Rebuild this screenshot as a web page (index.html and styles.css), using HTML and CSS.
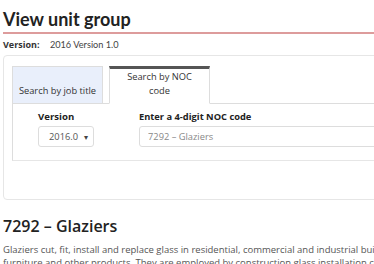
FILE: index.html
```html
<!DOCTYPE html>
<html lang="en">
<head>
    <meta charset="UTF-8">
    <meta name="viewport" content="width=device-width, initial-scale=1.0">
    <title>View unit group</title>
    <link rel="stylesheet" href="styles.css">
</head>
<body>
    <div class="page">
        <!-- Header -->
        <header class="page-header">
            <h1>View unit group</h1>
        </header>
        <p class="version-line"><strong>Version:</strong> <span>2016 Version 1.0</span></p>

        <!-- Search panel -->
        <section class="panel">
            <ul class="tabs">
                <li class="tab tab-title">Search by job title</li>
                <li class="tab tab-noc active">Search by NOC code</li>
            </ul>
            <div class="tab-content">
                <div class="field field-version">
                    <label>Version</label>
                    <div class="select">2016.0 <span class="caret">&#9662;</span></div>
                </div>
                <div class="field field-code">
                    <label for="noc-code">Enter a 4-digit NOC code</label>
                    <input type="text" id="noc-code" placeholder="7292 &ndash; Glaziers">
                </div>
            </div>
        </section>

        <!-- Unit group -->
        <section class="unit-group">
            <h2>7292 &ndash; Glaziers</h2>
            <p>Glaziers cut, fit, install and replace glass in residential, commercial and industrial buildings, on exterior walls of buildings and in furniture and other products. They are employed by construction glass installation contractors, retail service and repair shops and glass fabrication shops, or they may be self-employed.</p>
        </section>
    </div>
</body>
</html>
```

FILE: styles.css
```css
/* Global Styles */
html, body {
    overflow: hidden;
}

body {
    margin: 0;
    padding: 0;
    font-family: "Open Sans", sans-serif;
    color: #333;
    background-color: #fff;
}

.page {
    width: 580px;
    padding: 0 3px;
}

.page-header {
    border-bottom: 2px solid #dd9c9c; /* Soft red rule */
}

h1 {
    margin: 0;
    padding-top: 9px;
    padding-bottom: 3px;
    font-family: Lato, sans-serif;
    font-size: 18px;
    font-weight: 700;
    line-height: 20px;
    color: #222;
}

.version-line {
    margin: 5px 0 0;
    font-size: 9px;
    line-height: 12px;
    color: #333;
}

.version-line strong {
    margin-right: 8px;
}

.version-line span {
    font-family: Lato, sans-serif;
    font-size: 9.2px;
    color: #444;
}

/* Search panel */
.panel {
    margin-top: 4px;
    padding: 10px 0 38px 8px;
    border: 1px solid #e6e6e6;
    border-radius: 4px;
}

.tabs {
    display: flex;
    gap: 6px;
    margin: 0 0 -1px;
    padding: 0;
    list-style: none;
    position: relative;
}

.tab {
    display: flex;
    align-items: flex-end;
    justify-content: center;
    box-sizing: border-box;
    padding: 1px 6px 5px;
    font-size: 9.3px;
    line-height: 14px;
    text-align: center;
    white-space: normal;
    color: #333;
    border: 1px solid #ddd;
}

.tab-title {
    width: 91px;
    padding-left: 2px;
    padding-right: 2px;
    white-space: nowrap;
    background-color: #e9effb; /* Light blue */
}

.tab-noc {
    width: 101px;
    padding-left: 12px;
    padding-right: 12px;
}

.tab.active {
    background-color: #fff;
    border-top: 3px solid #555;
    border-bottom-color: #fff;
}

.tab-content {
    display: grid;
    grid-template-columns: 101px 1fr;
    padding: 6px 0 13px 25px;
    border-top: 1px solid #ddd;
    border-left: 1px solid #ddd;
    border-bottom: 1px solid #e6e6e6;
}

.field label {
    display: block;
    margin-bottom: 3px;
    font-size: 9.3px;
    font-weight: bold;
    line-height: 13px;
    color: #222;
}

.field-version label {
    font-size: 9.6px;
}

.select {
    display: flex;
    align-items: center;
    justify-content: space-between;
    box-sizing: border-box;
    width: 56px;
    height: 21px;
    padding: 0 5px 0 10px;
    font-size: 9.3px;
    color: #555;
    border: 1px solid #ddd;
    border-radius: 3px;
}

.caret {
    font-size: 8px;
    color: #444;
}

.field-code input {
    display: block;
    box-sizing: border-box;
    width: 100%;
    height: 21px;
    margin: 0;
    padding: 0 8px;
    font-family: "Open Sans", sans-serif;
    font-size: 9.3px;
    border: 1px solid #ddd;
    border-radius: 3px;
}

.field-code input::placeholder {
    color: #888;
}

/* Unit group */
.unit-group h2 {
    margin: 14px 0 0;
    font-size: 16px;
    font-weight: 600;
    line-height: 24px;
    color: #222;
}

.unit-group p {
    max-width: 568px;
    margin: 5px 0 0;
    font-size: 9.5px;
    line-height: 13px;
    color: #555;
}
```
